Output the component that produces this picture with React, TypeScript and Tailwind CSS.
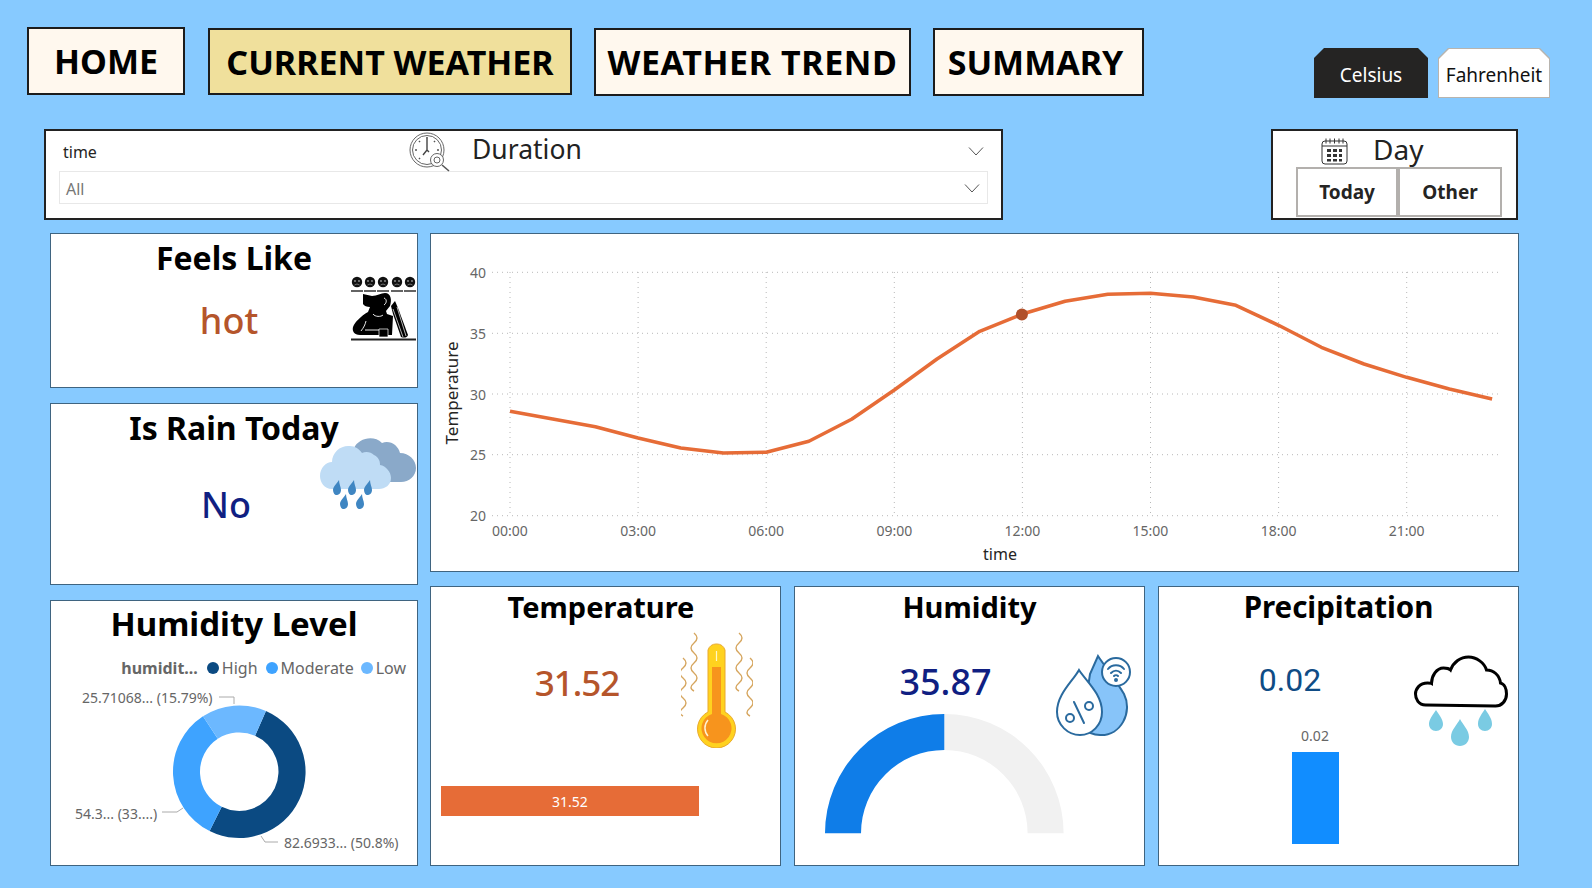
const temps = [532, 555, 578, 612, 642, 657, 655, 622, 556, 468, 375, 292, 240, 202, 181, 178, 189, 214, 274, 340, 390, 430, 465, 495]

function polar(cx: number, cy: number, r: number, deg: number) {
  const a = ((deg - 90) * Math.PI) / 180
  return `${(cx + r * Math.cos(a)).toFixed(2)} ${(cy + r * Math.sin(a)).toFixed(2)}`
}

function ring(cx: number, cy: number, r1: number, r2: number, from: number, to: number) {
  const large = to - from > 180 ? 1 : 0
  return `M${polar(cx, cy, r1, from)}A${r1} ${r1} 0 ${large} 1 ${polar(cx, cy, r1, to)}L${polar(cx, cy, r2, to)}A${r2} ${r2} 0 ${large} 0 ${polar(cx, cy, r2, from)}Z`
}

function NavButton({ label, active, className }: { label: string; active?: boolean; className: string }) {
  return (
    <div className={`flex items-center justify-center border-2 border-[#1c1c1c] pt-[1px] text-[34px] font-bold text-black ${active ? 'bg-[#f0e09c]' : 'bg-[#fff8ee]'} ${className}`}>
      {label}
    </div>
  )
}

function Chevron({ className }: { className: string }) {
  return (
    <svg className={className} viewBox="0 0 16 9" fill="none" stroke="#555" strokeWidth="1">
      <path d="M1 .5l7 7.5 7-7.5" />
    </svg>
  )
}

function ClockIcon() {
  return (
    <svg className="absolute left-[363px] top-[0px] h-[41px] w-[42px]" viewBox="0 0 42 41" fill="none" stroke="#555" strokeWidth=".9">
      <circle cx="18" cy="19" r="17" />
      <circle cx="18" cy="19" r="14.500" />
      <path d="M18 8v11l-4 5M18 19l2 2" strokeWidth="1.400" stroke="#444" />
      <path d="M18 6v2M6 19h2M28 19h2M10 10l1 1M26 10l-1 1M10 28l1-1" strokeWidth="1.600" />
      <circle cx="28" cy="29" r="6.500" fill="#fff" />
      <circle cx="28" cy="29" r="3" />
      <path d="M33 34l7 6" strokeWidth="1.600" />
    </svg>
  )
}

function CalendarIcon() {
  return (
    <svg className="absolute left-[48px] top-[6px] h-[28px] w-[27px]" viewBox="0 0 27 28" fill="none" stroke="#333">
      <rect x="1" y="4" width="25" height="23" rx="3" />
      <path d="M1 9h25" />
      <path d="M5 1.500v5M9 1.500v5M13.500 1.500v5M18 1.500v5M22 1.500v5" />
      <path d="M6 12h4v3H6zM12 12h4v3h-4zM18 12h3v3h-3zM6 17h4v3H6zM12 17h4v3h-4zM18 17h3v3h-3zM6 22h4v2.500H6zM12 22h4v2.500h-4zM18 22h3v2.500h-3z" fill="#333" stroke="none" />
    </svg>
  )
}

function MoodIcon() {
  const faces = [6, 19, 32, 46, 59]
  return (
    <svg className="absolute left-[300px] top-[42px] h-[65px] w-[66px]" viewBox="0 0 66 65">
      {faces.map((x) => (
        <g key={x}>
          <circle cx={x} cy="6" r="5.200" fill="#111" />
          <circle cx={x - 2} cy="5" r=".9" fill="#999" />
          <circle cx={x + 2} cy="5" r=".9" fill="#999" />
          <path d={`M${x - 2.500} 9q2.500-2 5 0`} stroke="#999" strokeWidth=".7" fill="none" />
          <path d={`M${x - 6} 15h12`} stroke="#222" strokeWidth="1.400" />
        </g>
      ))}
      <path d="M12 18l9 2c5 0 9-3 13-3 6 0 7 7 5 13l-4 5 1 3 6 2-1 19H9c-6 0-8-4-7-8 2-5 8-11 15-15l2-5c-3 0-6-1-7-3z" fill="#000" />
      <path d="M33 22c3 1 3 5 0 7M22 38c2 3 8 3 10 1M10 55c3-4 4-6 5-10M14 54h14" stroke="#fff" strokeWidth=".9" fill="none" />
      <path d="M28 53h9v8h-9z" fill="#000" stroke="#fff" strokeWidth=".7" />
      <path d="M44 25l3 7 10 27c-1 3-4 3-7 2l-8-23-2-8z" fill="#000" />
      <path d="M42 33l10 28M46 31l9 29" stroke="#fff" strokeWidth=".7" />
      <path d="M0 63.500h65" stroke="#222" strokeWidth="2" />
    </svg>
  )
}

function RainCloudIcon() {
  const drops = [[16, 50], [31, 50], [47, 50], [23, 64], [39, 64]]
  return (
    <svg className="absolute left-[269px] top-[32px] h-[74px] w-[98px]" viewBox="0 0 98 74">
      <path d="M34 12C38 3 53-2 62 7c8-3 16 2 18 10 9 0 16 7 16 15s-7 14-15 14H50z" fill="#8aa9c9" />
      <path d="M12 53C4 53 0 46 0 40c0-8 6-14 12-14 0-10 9-17 18-16 5 0 9 3 12 7 4-2 9-1 12 2 4 2 6 5 6 10 6 1 11 7 11 13 0 7-6 11-12 11z" fill="#bfdcf5" />
      {drops.map(([x, y]) => (
        <path key={`${x}-${y}`} d={`M${x + 3} ${y - 6}c-2 3-6 7-6 10 0 3 2 5 3 5 3 0 5-2 5-5s-2-6-2-10z`} fill="#3f86c2" />
      ))}
    </svg>
  )
}

function ThermometerIcon() {
  const wave = 'q6 5 0 10t0 10t0 10t0 10t0 10t0 8'
  return (
    <svg className="absolute left-[250px] top-[45px] h-[116px] w-[72px]" viewBox="0 0 72 116" fill="none">
      <path d={`M13 1${wave}`} stroke="#d6a65f" strokeWidth="1.400" />
      <path d={`M2 26${wave}`} stroke="#d6a65f" strokeWidth="1.400" />
      <path d={`M58 1${wave}`} stroke="#d6a65f" strokeWidth="1.400" />
      <path d={`M69 26${wave}`} stroke="#d6a65f" strokeWidth="1.400" />
      <path d="M27 18a9 9 0 0 1 17 0v62a19 19 0 1 1-17 0z" fill="#ffd21f" stroke="#e9a92c" strokeWidth="1" />
      <path d="M31 35h9v47a15 15 0 1 1-9 0z" fill="#f7941d" />
      <path d="M27 104a12 12 0 0 1 0-16" stroke="#fff3d0" strokeWidth="1.500" />
      <path d="M35.500 19v10" stroke="#fff8c8" strokeWidth="1.200" />
    </svg>
  )
}

function DropsIcon() {
  return (
    <svg className="absolute left-[261px] top-[67px] h-[84px] w-[77px]" viewBox="0 0 77 84" stroke="#2a6a9e" strokeWidth="2">
      <path d="M42 2c6 9 19 26 26 38 9 18-3 42-24 41-7 0-13-3-18-8L34 20z" fill="#87c4f9" />
      <path d="M23 16C17 27 1 40 1 58c0 13 11 23 23 23s22-10 22-23C46 40 30 27 23 16z" fill="#fff" />
      <circle cx="14" cy="64" r="4" fill="none" />
      <circle cx="33" cy="52" r="4" fill="none" />
      <path d="M18 48l10 21" strokeLinecap="round" />
      <circle cx="60" cy="18" r="14" fill="#fff" />
      <path d="M52 15c4-5 12-5 16 0M55 19c3-3 7-3 10 0M58 22c1-1 3-1 4 0" fill="none" strokeLinecap="round" />
      <circle cx="60" cy="26" r="1" fill="#2a6a9e" />
    </svg>
  )
}

function CloudDropsIcon() {
  return (
    <svg className="absolute left-[255px] top-[67px] h-[94px] w-[94px]" viewBox="0 0 94 94">
      <path d="M12 50C5 50 2 44 2 39s4-11 12-11c2 0 3 0 4 .500C18 21 23 13 30 13c3 0 6 1 7 2 3-8 10-13 18-13s16 6 18 13c7 0 13 5 14 13 4 1 6 6 6 11 0 7-5 12-11 12z" fill="#fff" stroke="#000" strokeWidth="3" transform="translate(-.5 1)" />
      <path d="M22 56c-3 5-7 9-7 14 0 4 3 7 7 7s7-3 7-7c0-5-4-9-7-14zM46 65c-3 6-9 11-9 18 0 5 4 9 9 9s9-4 9-9c0-7-6-12-9-18zM71 55c-3 5-7 9-7 15 0 4 3 7 7 7s7-3 7-7c0-6-4-10-7-15z" fill="#7acbe3" />
    </svg>
  )
}

function LineChart() {
  const grid = [273.3, 334.3, 395, 455.7, 516.7]
  const ticks = ['00:00', '03:00', '06:00', '09:00', '12:00', '15:00', '18:00', '21:00']
  const x = (h: number) => 510 + h * 42.7
  const points = temps.map((t, h) => `${x(h).toFixed(1)},${(235 + t / 3).toFixed(1)}`).join(' ')
  return (
    <svg className="block h-[337px] w-[1087px]" viewBox="431 235 1087 337" fontFamily="'Noto Sans', sans-serif">
      {grid.map((y, i) => (
        <g key={y}>
          <path d={`M492 ${y}H1498`} stroke="#b8b8b8" strokeDasharray="1 4" />
          <text x="486" y={y + 5.500} textAnchor="end" fontSize="14" fill="#666">{40 - i * 5}</text>
        </g>
      ))}
      {ticks.map((t, i) => (
        <g key={t}>
          <path d={`M${x(i * 3)} 273V517`} stroke="#b8b8b8" strokeDasharray="1 4" />
          <text x={x(i * 3)} y="537" textAnchor="middle" fontSize="14" fill="#666">{t}</text>
        </g>
      ))}
      <polyline points={points} fill="none" stroke="#e66c37" strokeWidth="3.500" strokeLinejoin="round" />
      <circle cx={x(12) - 0.5} cy="315.500" r="6" fill="#b1502a" />
      <text x="1000" y="561" textAnchor="middle" fontSize="16" fill="#252423">time</text>
      <text transform="translate(458 394) rotate(-90)" textAnchor="middle" fontSize="17" fill="#252423">Temperature</text>
    </svg>
  )
}

function Donut() {
  return (
    <svg className="absolute left-[0px] top-[84px] h-[180px] w-[366px]" viewBox="51 685 366 180" fontFamily="'Noto Sans', sans-serif" fontSize="14" fill="#666">
      <path d={ring(239.3, 771.7, 66.3, 39.3, 23.7, 206.6)} fill="#0b4a82" />
      <path d={ring(239.3, 771.7, 66.3, 39.3, 206.6, 326.8)} fill="#3ea3ff" />
      <path d={ring(239.3, 771.7, 66.3, 39.3, 326.8, 383.7)} fill="#6cb8ff" />
      <path d="M219 697h15v7M162 812h15l6-4M278 842h-13l-4-6" fill="none" stroke="#aaa" />
      <text x="82" y="703">25.71068... (15.79%)</text>
      <text x="75" y="819">54.3... (33....)</text>
      <text x="284" y="848">82.6933... (50.8%)</text>
    </svg>
  )
}

function Gauge() {
  return (
    <svg className="absolute left-[30px] top-[126px] h-[121px] w-[240px]" viewBox="825 713 240 121">
      <path d={ring(944.3, 833.3, 119.3, 83.3, 0, 90)} fill="#f1f1f1" />
      <path d={ring(944.3, 833.3, 119.3, 83.3, 270, 360)} fill="#0f7de8" />
    </svg>
  )
}

function Card({ className, children }: { className: string; children: React.ReactNode }) {
  return <div className={`relative flex flex-col items-center border border-[#3f6480] bg-white ${className}`}>{children}</div>
}

export default function App() {
  return (
    <div className="h-[888px] w-[1592px] overflow-hidden bg-[#87caff] pt-[27px] font-['Noto_Sans',sans-serif]">
      {/* Nav */}
      <div className="flex h-[71px] items-start pl-[27px]">
        <NavButton label="HOME" className="h-[68px] w-[158px]" />
        <NavButton label="CURRENT WEATHER" active className="ml-[23px] mt-[1px] h-[67px] w-[364px]" />
        <NavButton label="WEATHER TREND" className="ml-[22px] mt-[1px] h-[68px] w-[317px] tracking-[0.6px]" />
        <NavButton label="SUMMARY" className="ml-[22px] mt-[1px] h-[68px] w-[211px] pr-[6px]" />
        <div className="ml-[170px] mt-[21px] flex h-[50px] w-[114px] items-center justify-center bg-[#252423] pt-[4px] text-[19px] text-white [clip-path:polygon(10px_0,104px_0,114px_10px,114px_50px,0_50px,0_10px)]">
          Celsius
        </div>
        <div className="ml-[10px] mt-[21px] h-[50px] w-[112px] bg-[#b8b4ae] p-px [clip-path:polygon(10px_0,102px_0,112px_10px,112px_50px,0_50px,0_10px)]">
          <div className="flex h-full w-full items-center justify-center bg-white pt-[4px] text-[19px] text-[#111] [clip-path:polygon(10px_0,100px_0,110px_10px,110px_48px,0_48px,0_10px)]">
            Fahrenheit
          </div>
        </div>
      </div>

      {/* Slicers */}
      <div className="mt-[31px] flex pl-[44px]">
        <div className="relative h-[91px] w-[959px] border-2 border-[#222] bg-white">
          <div className="flex h-[40px] items-center pl-[17px]">
            <span className="w-[409px] pt-[2px] text-[16px] text-[#252423]">time</span>
            <span className="pb-[4px] text-[26.500px] leading-none text-[#222]">Duration</span>
            <Chevron className="ml-auto mr-[17px] h-[9px] w-[16px]" />
          </div>
          <div className="mx-[13px] flex h-[33px] items-center justify-between border border-[#e8e8e8] pl-[6px] pr-[7px] pt-[2px] text-[16px] text-[#777]">
            All
            <Chevron className="h-[9px] w-[16px]" />
          </div>
          <ClockIcon />
        </div>
        <div className="relative ml-[268px] h-[91px] w-[247px] border-2 border-[#222] bg-white">
          <CalendarIcon />
          <div className="h-[36px] pl-[100px] text-[28px] leading-[36px] text-[#222]">Day</div>
          <div className="ml-[23px] flex h-[50px] w-[206px] text-[19px] font-bold text-[#252423]">
            <div className="flex w-[102px] items-center justify-center border-2 border-[#b3b0ad]">Today</div>
            <div className="flex flex-1 items-center justify-center border-2 border-[#b3b0ad]">Other</div>
          </div>
        </div>
      </div>

      {/* Main */}
      <div className="mt-[13px] flex gap-[12px] pl-[50px]">
        <div className="flex w-[368px] flex-col gap-[15px]">
          <Card className="h-[155px]">
            <div className="pt-[2px] text-[32px] font-bold leading-[44px] text-black">Feels Like</div>
            <div className="mr-[10px] mt-[17px] text-[36px] font-medium leading-[48px] text-[#b5552b]">hot</div>
            <MoodIcon />
          </Card>
          <Card className="h-[182px]">
            <div className="pt-[2px] text-[32px] font-bold leading-[44px] text-black">Is Rain Today</div>
            <div className="mr-[16px] mt-[31px] text-[36px] font-medium leading-[48px] text-[#101f82]">No</div>
            <RainCloudIcon />
          </Card>
          <Card className="h-[266px]">
            <div className="text-[33px] font-bold leading-[46px] text-black">Humidity Level</div>
            <div className="mt-[9px] flex w-full items-center justify-end pr-[11px] text-[16px] leading-[24px] text-[#666]">
              <span className="mr-[9px] font-bold">humidit...</span>
              <span className="mr-[3px] h-[12px] w-[12px] rounded-full bg-[#0b4a82]" />
              <span className="mr-[8px]">High</span>
              <span className="mr-[3px] h-[12px] w-[12px] rounded-full bg-[#3ea3ff]" />
              <span className="mr-[7px]">Moderate</span>
              <span className="mr-[3px] h-[12px] w-[12px] rounded-full bg-[#6cb8ff]" />
              <span>Low</span>
            </div>
            <Donut />
          </Card>
        </div>

        <div className="flex w-[1089px] flex-col gap-[14px]">
          <div className="h-[339px] border border-[#3f6480] bg-white">
            <LineChart />
          </div>
          <div className="flex gap-[13px]">
            <Card className="h-[280px] w-[351px]">
              <div className="mr-[9px] text-[29px] font-bold leading-[40px] text-black">Temperature</div>
              <div className="mr-[57px] mt-[31px] text-[35px] font-medium leading-[50px] tracking-[-1px] text-[#b5552b]">31.52</div>
              <ThermometerIcon />
              <div className="ml-[10px] mt-[78px] flex h-[30px] w-[258px] items-center justify-center self-start bg-[#e66c37] text-[14px] text-white">31.52</div>
            </Card>
            <Card className="h-[280px] w-[351px]">
              <div className="text-[29px] font-bold leading-[40px] text-black">Humidity</div>
              <div className="mr-[48px] mt-[30px] text-[36px] font-medium leading-[50px] text-[#101f82]">35.87</div>
              <DropsIcon />
              <Gauge />
            </Card>
            <Card className="h-[280px] w-[361px]">
              <div className="text-[29.500px] font-bold leading-[40px] text-black">Precipitation</div>
              <div className="mr-[97px] mt-[30px] font-['Roboto',sans-serif] text-[32px] leading-[46px] text-[#0f4c85]">0.02</div>
              <CloudDropsIcon />
              <div className="mr-[47px] mt-[23px] text-[14px] leading-[20px] text-[#666]">0.02</div>
              <div className="mr-[47px] mt-[6px] h-[92px] w-[47px] bg-[#118dff]" />
            </Card>
          </div>
        </div>
      </div>
    </div>
  )
}
